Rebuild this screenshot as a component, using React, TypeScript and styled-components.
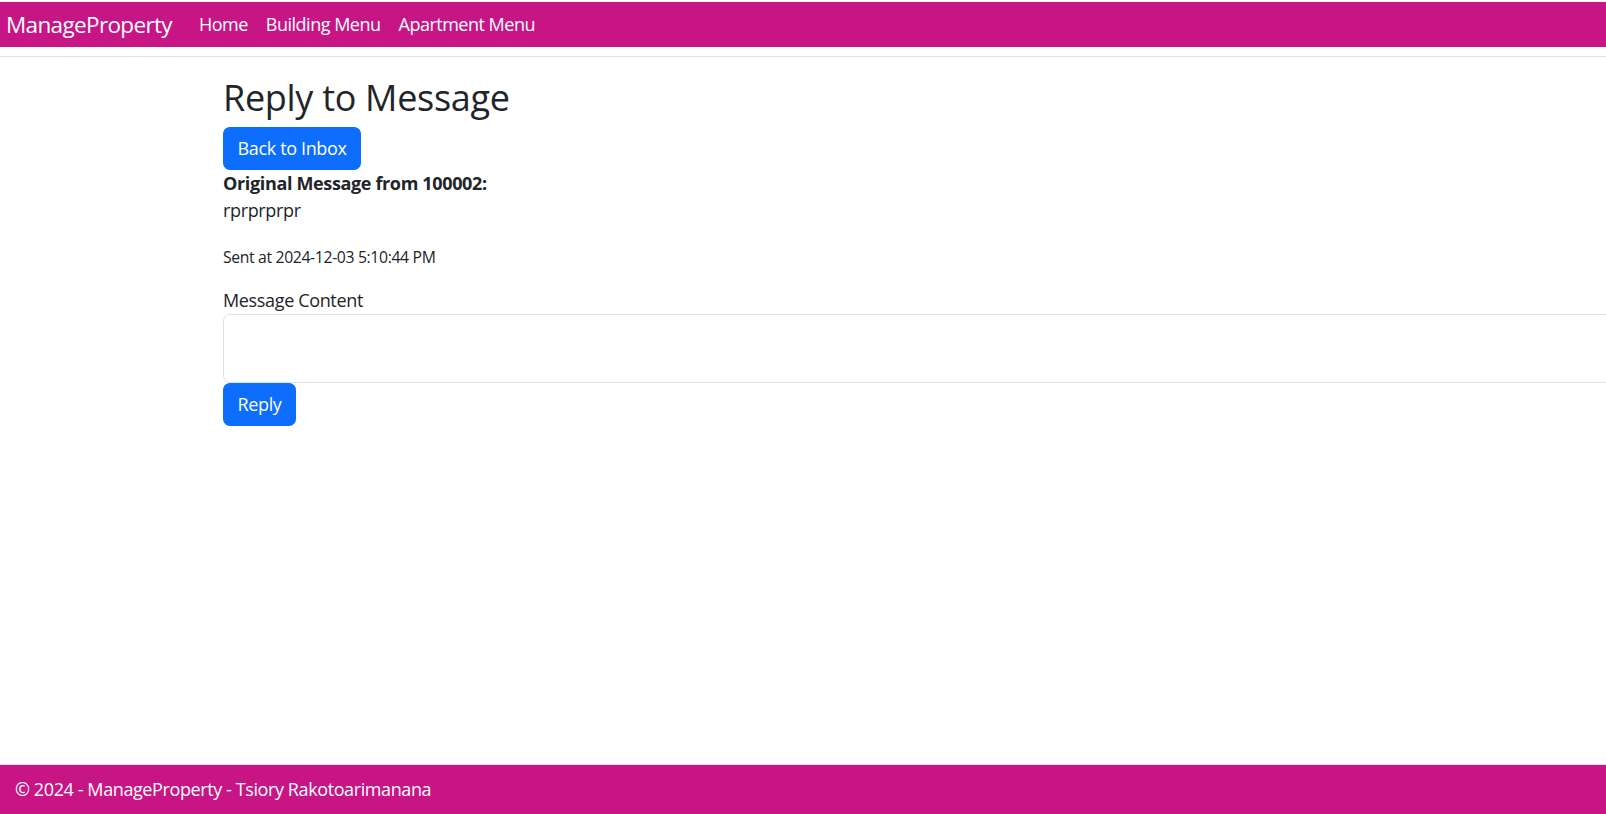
import React from "react";
import styled, { createGlobalStyle } from "styled-components";

const GlobalStyle = createGlobalStyle`
  html, body {
    margin: 0;
    padding: 0;
    overflow: hidden;
    background: #ffffff;
  }
  body {
    font-family: "Open Sans", "Noto Sans", sans-serif;
    color: #212529;
    font-size: 18px;
    line-height: 27px;
    letter-spacing: -0.35px;
  }
  * { box-sizing: border-box; }
`;

const Page = styled.div`
  min-height: 100vh;
  display: flex;
  flex-direction: column;
`;

const Header = styled.header`
  padding-top: 2px;
  padding-bottom: 9px;
  border-bottom: 1px solid #dee2e6;
`;

const Navbar = styled.nav`
  height: 45px;
  background: #c71585;
  display: flex;
  align-items: center;
  padding-left: 6px;
`;

const Brand = styled.a`
  color: #ffffff;
  font-size: 22.5px;
  line-height: 34px;
  letter-spacing: -0.65px;
  text-decoration: none;
  margin-right: 18px;
`;

const NavList = styled.ul`
  display: flex;
  list-style: none;
  margin: 0;
  padding: 0;
`;

const NavLink = styled.a`
  display: block;
  color: #ffffff;
  font-size: 18px;
  line-height: 27px;
  letter-spacing: -0.5px;
  padding: 0 9px;
  text-decoration: none;
`;

const Main = styled.main`
  flex: 1;
  padding: 19px 0 0 223px;
`;

const Title = styled.h2`
  margin: 0 0 8px;
  font-size: 36px;
  line-height: 43px;
  font-weight: 500;
  letter-spacing: -0.3px;
`;

const Button = styled.button`
  display: inline-block;
  height: 43px;
  padding: 0 13.5px;
  background: #0d6efd;
  border: 1px solid #0d6efd;
  border-radius: 6.75px;
  color: #ffffff;
  font-family: inherit;
  font-size: 18px;
  line-height: 27px;
  letter-spacing: inherit;
  cursor: pointer;
`;

const BlockRow = styled.div`
  display: block;
`;

const Strong = styled.p`
  margin: 0;
  font-weight: 700;
`;

const Body = styled.p`
  margin: 0 0 22px;
`;

const Small = styled.small`
  display: block;
  font-size: 15.75px;
  line-height: 23.6px;
  margin-bottom: 17px;
`;

const Label = styled.label`
  display: block;
  margin-bottom: 0;
`;

const TextArea = styled.textarea`
  display: block;
  width: calc(100vw - 180px);
  height: 69px;
  border: 1px solid #dee2e6;
  border-radius: 6.75px;
  padding: 6.75px 13.5px;
  font-family: inherit;
  font-size: 18px;
  resize: vertical;
  outline: none;
`;

const Footer = styled.footer`
  border-top: 1px solid #dee2e6;
  height: 50px;
  background: #c71585;
  background-clip: padding-box;
  color: #ffffff;
  display: flex;
  align-items: center;
  padding-left: 15px;
  font-size: 18px;
  letter-spacing: -0.4px;
`;

export default function App() {
  return (
    <>
      <GlobalStyle />
      <Page>
        <Header>
          <Navbar>
            <Brand href="#">ManageProperty</Brand>
            <NavList>
              <li><NavLink href="#">Home</NavLink></li>
              <li><NavLink href="#">Building Menu</NavLink></li>
              <li><NavLink href="#">Apartment Menu</NavLink></li>
            </NavList>
          </Navbar>
        </Header>
        <Main>
          <Title>Reply to Message</Title>
          <BlockRow>
            <Button type="button">Back to Inbox</Button>
          </BlockRow>
          <Strong>Original Message from 100002:</Strong>
          <Body>rprprprpr</Body>
          <Small>Sent at 2024-12-03 5:10:44 PM</Small>
          <Label htmlFor="content">Message Content</Label>
          <TextArea id="content" />
          <BlockRow>
            <Button type="submit">Reply</Button>
          </BlockRow>
        </Main>
        <Footer>© 2024 - ManageProperty - Tsiory Rakotoarimanana</Footer>
      </Page>
    </>
  );
}
